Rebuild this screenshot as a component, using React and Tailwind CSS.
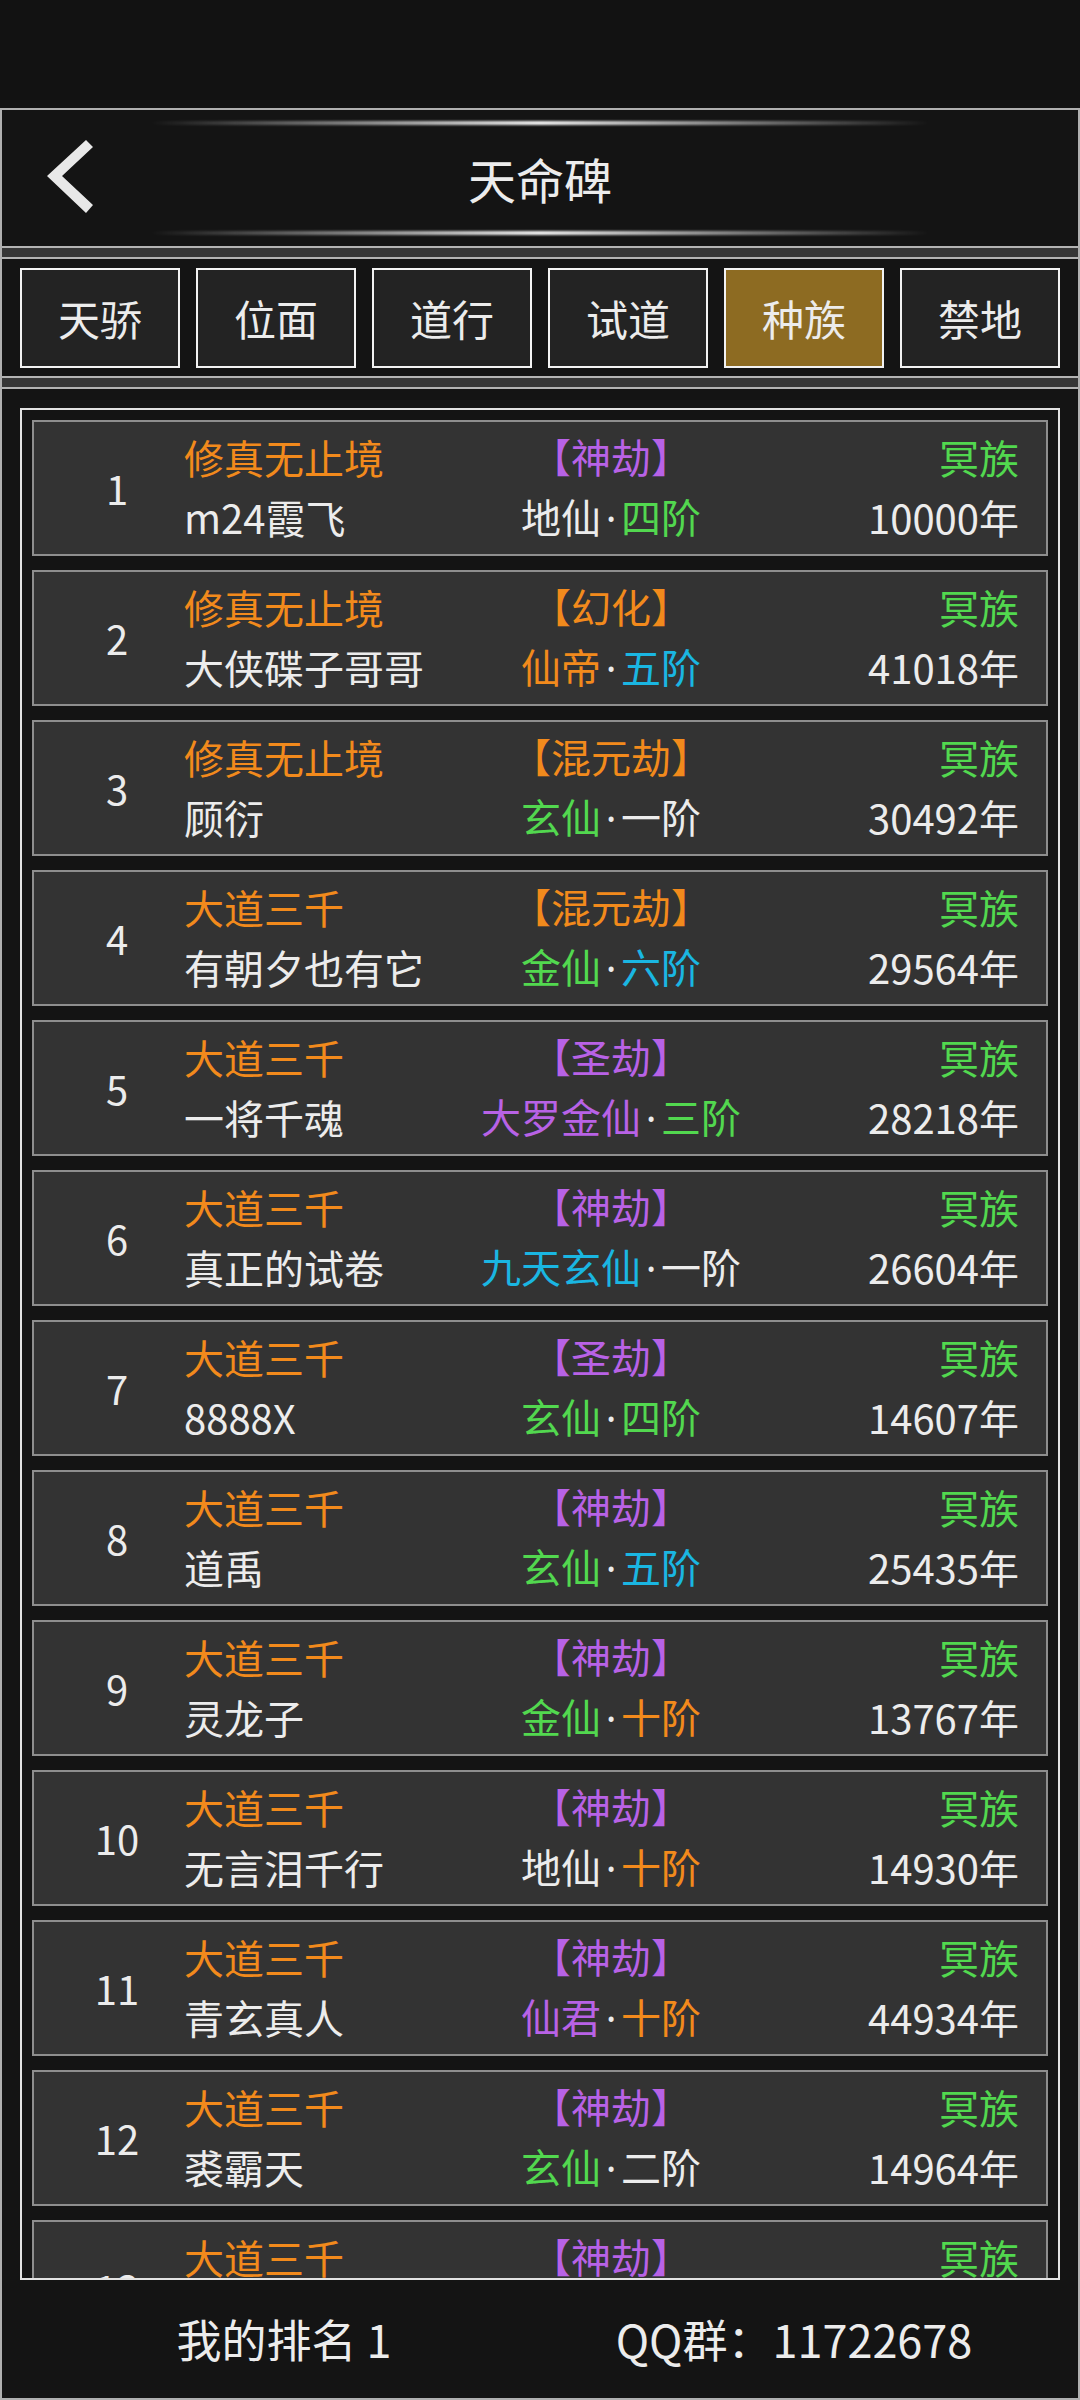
import React from "react";

const C = {
  o: "text-[#f28a1c]",
  p: "text-[#b862e6]",
  g: "text-[#52d84f]",
  c: "text-[#1ab6e2]",
  w: "text-[#ececec]",
};

const rows = [
  ["修真无止境", "m24霞飞", "【神劫】", "p", [["地仙", "w"], ["四阶", "g"]], "10000年"],
  ["修真无止境", "大侠碟子哥哥", "【幻化】", "o", [["仙帝", "o"], ["五阶", "c"]], "41018年"],
  ["修真无止境", "顾衍", "【混元劫】", "o", [["玄仙", "g"], ["一阶", "w"]], "30492年"],
  ["大道三千", "有朝夕也有它", "【混元劫】", "o", [["金仙", "g"], ["六阶", "c"]], "29564年"],
  ["大道三千", "一将千魂", "【圣劫】", "p", [["大罗金仙", "p"], ["三阶", "g"]], "28218年"],
  ["大道三千", "真正的试卷", "【神劫】", "p", [["九天玄仙", "c"], ["一阶", "w"]], "26604年"],
  ["大道三千", "8888X", "【圣劫】", "p", [["玄仙", "g"], ["四阶", "g"]], "14607年"],
  ["大道三千", "道禹", "【神劫】", "p", [["玄仙", "g"], ["五阶", "c"]], "25435年"],
  ["大道三千", "灵龙子", "【神劫】", "p", [["金仙", "g"], ["十阶", "o"]], "13767年"],
  ["大道三千", "无言泪千行", "【神劫】", "p", [["地仙", "w"], ["十阶", "o"]], "14930年"],
  ["大道三千", "青玄真人", "【神劫】", "p", [["仙君", "p"], ["十阶", "o"]], "44934年"],
  ["大道三千", "裘霸天", "【神劫】", "p", [["玄仙", "g"], ["二阶", "w"]], "14964年"],
  ["大道三千", "逍遥子", "【神劫】", "p", [["玄仙", "g"], ["一阶", "w"]], "13520年"],
];

const tabs = ["天骄", "位面", "道行", "试道", "种族", "禁地"];

function Band() {
  return <div className="h-[13px] border-y-2 border-[#b4b4b4] bg-[#373737]" />;
}

function GlowLine() {
  return (
    <div className="mx-auto h-[4px] w-[780px] rounded-full bg-gradient-to-r from-transparent via-[#f4f4f4] to-transparent blur-[1px]" />
  );
}

export default function App() {
  return (
    <div
      className="w-[1080px] h-[2400px] bg-[#121212] text-[#ececec] overflow-hidden"
      style={{ fontFamily: '"Noto Sans CJK SC", "Noto Sans", sans-serif' }}
    >
      <div className="h-[108px] bg-[#121212]" />
      <div className="h-[2292px] border-2 border-[#b0b0b0] flex flex-col">
        {/* header */}
        <div className="relative h-[136px] bg-[#141414] flex flex-col justify-between py-[11px]">
          <GlowLine />
          <div className="text-center text-[48px] leading-none text-[#ececec]">天命碑</div>
          <GlowLine />
          <svg className="absolute left-[-2px] top-[-2px]" width="120" height="140" viewBox="0 110 120 140">
            <polygon points="47,178 86,142 93,149 62,178 93,207 86,215" fill="#e8e8e8" />
          </svg>
        </div>
        <Band />
        {/* tabs */}
        <div className="h-[117px] bg-[#141414] flex gap-[16px] px-[18px] pt-[9px] pb-[8px]">
          {tabs.map((t) => (
            <div
              key={t}
              className={
                "flex-1 border-2 border-[#f2f2f2] flex items-center justify-center text-[42px] leading-none " +
                (t === "种族" ? "bg-[#8d6b22]" : "bg-[#232323]")
              }
            >
              {t}
            </div>
          ))}
        </div>
        <Band />
        {/* list */}
        <div className="bg-[#141414] pt-[19px] px-[18px]">
          <div className="h-[1872px] border-2 border-[#e2e2e2] overflow-hidden">
            <div className="flex flex-col gap-[14px] px-[10px] pt-[10px]">
              {rows.map((r, i) => (
                <div
                  key={i}
                  className="h-[136px] shrink-0 border-2 border-[#8e8e8e] bg-[#333333] flex items-center text-[40px] whitespace-nowrap"
                >
                  <div className="w-[150px] pl-[16px] text-center leading-none text-[#ececec]">{i + 1}</div>
                  <div className="w-[277px] leading-[60px] -mt-[2px]">
                    <div className={C.o}>{r[0]}</div>
                    <div className={C.w}>{r[1]}</div>
                  </div>
                  <div className="w-[300px] text-center leading-[60px] -mt-[2px]">
                    <div className={C[r[3]]}>{r[2]}</div>
                    <div>
                      <span className={C[r[4][0][1]]}>{r[4][0][0]}</span>
                      <span
                        className="inline-block w-[20px] text-center text-[#ececec]"
                        style={{ fontFamily: '"Noto Sans", sans-serif' }}
                      >
                        ·
                      </span>
                      <span className={C[r[4][1][1]]}>{r[4][1][0]}</span>
                    </div>
                  </div>
                  <div className="flex-1 text-right pr-[27px] leading-[60px] -mt-[2px]">
                    <div className={C.g}>冥族</div>
                    <div className={C.w}>{r[5]}</div>
                  </div>
                </div>
              ))}
            </div>
          </div>
        </div>
        {/* footer */}
        <div className="flex-1 bg-[#141414] flex items-center text-[45px] text-[#ececec] whitespace-nowrap">
          <div className="w-1/2 text-center pl-[26px]">我的排名 1</div>
          <div className="w-1/2 text-center pr-[30px]">QQ群：11722678</div>
        </div>
      </div>
    </div>
  );
}
